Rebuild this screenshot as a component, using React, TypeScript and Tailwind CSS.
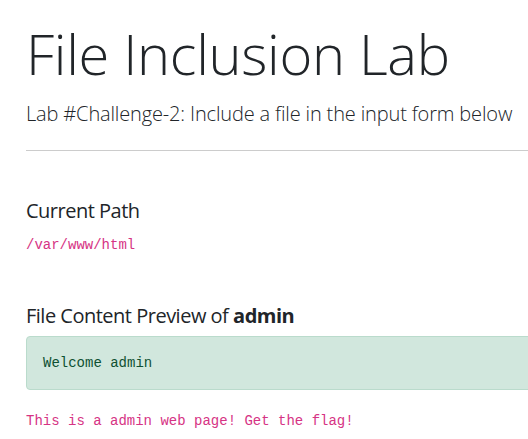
export default function App() {
  return (
    <div className="w-full overflow-x-hidden bg-white text-[#212529] font-['Open_Sans',sans-serif]">
      <div className="w-[640px] pl-[26px]">
        <h1 className="mt-[20px] text-[56px] font-light leading-[1.2] tracking-[-0.3px]">
          File Inclusion Lab
        </h1>
        <p className="mt-[12px] text-[20px] font-light leading-[1.5] tracking-[-0.15px]">
          Lab #Challenge-2: Include a file in the input form below
        </p>
        <hr className="mt-[21px] border-0 h-px bg-[#cccccc]" />

        <h5 className="mt-[48px] text-[20px] leading-[1.2] tracking-[-0.5px]">Current Path</h5>
        <code className="mt-[12px] block font-['Liberation_Mono',monospace] text-[14px] leading-[1.5] text-[#d63384]">
          /var/www/html
        </code>

        <h5 className="mt-[48px] text-[20px] leading-[1.2] tracking-[-0.5px]">
          File Content Preview of <b className="font-bold">admin</b>
        </h5>
        <div className="mt-[8px] rounded-[4px] border border-[#badbcc] bg-[#d1e7dd] p-4 text-[#0f5132]">
          <pre className="font-['Liberation_Mono',monospace] text-[14px] leading-[20px]">
            Welcome admin
          </pre>
        </div>
        <code className="mt-[21px] block font-['Liberation_Mono',monospace] text-[14px] leading-[1.5] text-[#d63384]">
          This is a admin web page! Get the flag!
        </code>
      </div>
    </div>
  );
}
